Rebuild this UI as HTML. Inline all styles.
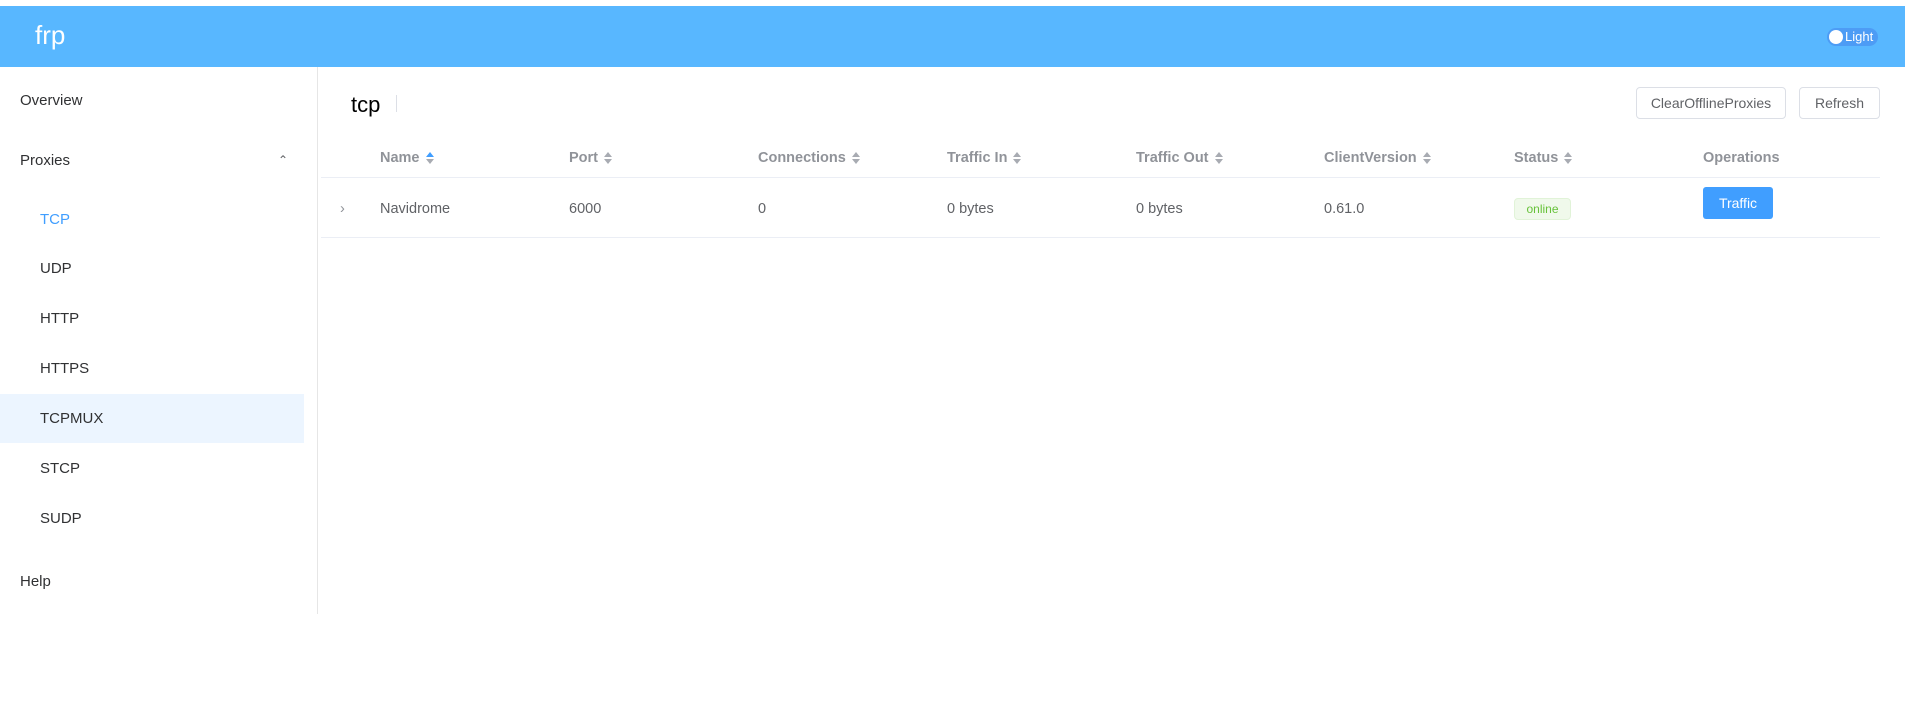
<!DOCTYPE html>
<html><head><meta charset="utf-8"><style>
*{margin:0;padding:0;box-sizing:border-box}
body{width:1905px;height:722px;background:#fff;font-family:"Liberation Sans",sans-serif;position:relative;overflow:hidden;color:#303133}
.hdr{position:absolute;left:0;top:6px;width:1905px;height:61px;background:#58b7ff}
.logo{position:absolute;left:35px;top:14px;color:#fff;font-size:26px}
.tog{position:absolute;left:1827px;top:22px;width:51px;height:18px;border-radius:9px;background:#4d9cf5}
.tog .k{position:absolute;left:2px;top:2px;width:14px;height:14px;border-radius:50%;background:#fff}
.tog span{position:absolute;left:18px;top:1px;color:#fff;font-size:13px}
.side{position:absolute;left:0;top:67px;width:318px;height:547px;border-right:1px solid #e6e6e6}
.mi{position:absolute;font-size:15px;color:#303133}
.sel{position:absolute;left:0;top:327px;width:304px;height:49px;background:#ecf5ff}
.tcp{position:absolute;left:351px;top:92px;font-size:22px;color:#000}
.div{position:absolute;left:396px;top:95px;width:1px;height:17px;background:#dcdfe6}
.btn{position:absolute;top:87px;height:32px;border:1px solid #dcdfe6;border-radius:4px;font-size:14px;color:#606266;text-align:center;line-height:30px}
.th{position:absolute;top:150px;font-size:14.5px;font-weight:bold;color:#909399}
.td{position:absolute;top:201px;font-size:14.5px;color:#606266}
.line{position:absolute;left:321px;width:1559px;height:1px;background:#ebeef5}
.s{display:inline-block;vertical-align:middle;margin-left:6px;width:8px;height:12px;position:relative}
.s:before{content:"";position:absolute;top:0;left:0;border:4px solid transparent;border-bottom:5px solid #a8abb2;border-top:0}
.s:after{content:"";position:absolute;bottom:0;left:0;border:4px solid transparent;border-top:5px solid #a8abb2;border-bottom:0}
.s.a:before{border-bottom-color:#409eff}
</style></head><body>
<div class="hdr"><div class="logo">frp</div><div class="tog"><div class="k"></div><span>Light</span></div></div>
<div class="side">
<div class="sel"></div>
<div class="mi" style="left:20px;top:25px">Overview</div>
<div class="mi" style="left:20px;top:85px">Proxies</div>
<div class="mi" style="left:278px;top:86px;font-size:12px;color:#606266">&#8963;</div>
<div class="mi" style="left:40px;top:144px;color:#409eff">TCP</div>
<div class="mi" style="left:40px;top:193px">UDP</div>
<div class="mi" style="left:40px;top:243px">HTTP</div>
<div class="mi" style="left:40px;top:293px">HTTPS</div>
<div class="mi" style="left:40px;top:343px">TCPMUX</div>
<div class="mi" style="left:40px;top:393px">STCP</div>
<div class="mi" style="left:40px;top:443px">SUDP</div>
<div class="mi" style="left:20px;top:506px">Help</div>
</div>
<div class="tcp">tcp</div><div class="div"></div>
<div class="btn" style="left:1636px;width:150px">ClearOfflineProxies</div>
<div class="btn" style="left:1799px;width:81px">Refresh</div>
<div class="th" style="left:380px">Name<i class="s a"></i></div>
<div class="th" style="left:569px">Port<i class="s"></i></div>
<div class="th" style="left:758px">Connections<i class="s"></i></div>
<div class="th" style="left:947px">Traffic In<i class="s"></i></div>
<div class="th" style="left:1136px">Traffic Out<i class="s"></i></div>
<div class="th" style="left:1324px">ClientVersion<i class="s"></i></div>
<div class="th" style="left:1514px">Status<i class="s"></i></div>
<div class="th" style="left:1703px">Operations</div>
<div class="line" style="top:177px"></div>
<div class="td" style="left:340px;color:#909399">&#8250;</div>
<div class="td" style="left:380px">Navidrome</div>
<div class="td" style="left:569px">6000</div>
<div class="td" style="left:758px">0</div>
<div class="td" style="left:947px">0 bytes</div>
<div class="td" style="left:1136px">0 bytes</div>
<div class="td" style="left:1324px">0.61.0</div>
<div style="position:absolute;left:1514px;top:198px;width:57px;height:22px;background:#f0f9eb;border:1px solid #e1f3d8;border-radius:4px;color:#67c23a;font-size:12px;text-align:center;line-height:20px">online</div>
<div style="position:absolute;left:1703px;top:187px;width:70px;height:32px;background:#409eff;border-radius:3px;color:#fff;font-size:14px;text-align:center;line-height:32px">Traffic</div>
<div class="line" style="top:237px"></div>
</body></html>
